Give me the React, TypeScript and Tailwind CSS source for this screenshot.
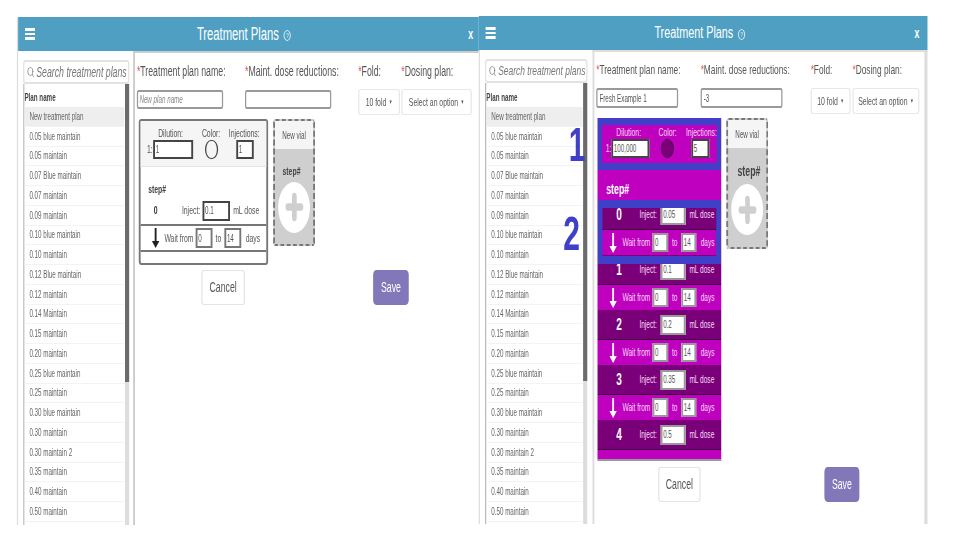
import { Plus, Search } from "lucide-react";

const PLANS = [
  "New treatment plan",
  "0.05 blue maintain",
  "0.05 maintain",
  "0.07 Blue maintain",
  "0.07 maintain",
  "0.09 maintain",
  "0.10 blue maintain",
  "0.10 maintain",
  "0.12 Blue maintain",
  "0.12 maintain",
  "0.14 Maintain",
  "0.15 maintain",
  "0.20 maintain",
  "0.25 blue maintain",
  "0.25 maintain",
  "0.30 blue maintain",
  "0.30 maintain",
  "0.30 maintain 2",
  "0.35 maintain",
  "0.40 maintain",
  "0.50 maintain",
];

// the whole page is squeezed sideways in the picture, so it is laid out 1536 wide and scaled to 960
function Header({ titleClass, closeMargin }: { titleClass: string; closeMargin: string }) {
  return (
    <div className="h-[34px] shrink-0 flex items-center bg-[#4f9fc2] text-white">
      <div className="ml-[11px] w-[16px] flex flex-col gap-[2px]">
        <span className="h-[2.5px] bg-white" />
        <span className="h-[2.5px] bg-white" />
        <span className="h-[2.5px] bg-white" />
      </div>
      <span className={`leading-none whitespace-nowrap ${titleClass}`}>Treatment Plans</span>
      <span className="ml-[8px] mt-[3px] size-[11px] rounded-full border border-white text-[8px] leading-[9px] text-center">?</span>
      <span className={`text-[14px] font-bold ${closeMargin}`}>x</span>
    </div>
  );
}

function Sidebar({ width, searchText, headHeight }: { width: string; searchText: string; headHeight: string }) {
  return (
    <div className={`${width} shrink-0 h-full pl-[8px] pt-[9px] flex flex-col`}>
      <div className="h-[24px] shrink-0 flex items-center gap-[3px] border-2 border-[#e2e2e2] rounded-[4px] pl-[4px] overflow-hidden">
        <Search className="size-[12px] text-[#888] shrink-0" />
        <span className={`italic text-[#777] whitespace-nowrap ${searchText}`}>Search treatment plans</span>
      </div>
      <div className="flex-1 min-h-0 border-l-2 border-[#bbb] relative overflow-hidden pr-[8px]">
        <div className={`${headHeight} pb-[2px] text-[10px] font-bold text-[#444] flex items-end`}>Plan name</div>
        {PLANS.map((plan, i) => (
          <div
            key={plan}
            className={`h-[19.75px] flex items-center pl-[8px] text-[10px] text-[#666] border-b border-[#f3f3f3] whitespace-nowrap ${i === 0 ? "bg-[#eeeeee]" : ""}`}
          >
            {plan}
          </div>
        ))}
        <div className="absolute right-0 top-0 bottom-0 w-[7px] bg-[#dddddd]">
          <div className="h-[298px] bg-[#6b6b6b]" />
        </div>
      </div>
    </div>
  );
}

function Field({ label, className }: { label: string; className: string }) {
  return (
    <div className={`text-[#555] whitespace-nowrap ${className}`}>
      <span className="text-[#e05050]">*</span>
      {label}
    </div>
  );
}

function Select({ label, className }: { label: string; className: string }) {
  return (
    <div className={`h-[26px] flex items-center justify-center gap-[4px] border-x-2 border-y border-[#e8e8e8] rounded-[4px] text-[11px] text-[#555] whitespace-nowrap ${className}`}>
      {label}
      <span className="text-[6px]">▼</span>
    </div>
  );
}

function Box({ value, className, dark }: { value: string; className: string; dark?: boolean }) {
  return (
    <div className={`bg-white border-x-[3px] border-y-2 flex items-center pl-[1px] text-[10px] text-[#555] whitespace-nowrap ${dark ? "border-[#444]" : "border-[#777]"} ${className}`}>
      {value}
    </div>
  );
}

function Arrow({ className }: { className: string }) {
  return (
    <svg viewBox="0 0 12 20" className={`w-[12px] h-[20px] shrink-0 ${className}`} fill="currentColor">
      <rect x="4.5" y="0" width="3" height="15" />
      <path d="M0 13 L12 13 L6 20 Z" />
    </svg>
  );
}

function NewVial({ height, stepClass }: { height: string; stepClass: string }) {
  return (
    <div className={`w-[67px] ${height} shrink-0 border-x-[3px] border-y-2 border-dashed border-[#777] rounded-[4px] flex flex-col bg-[#cfcfcf]`}>
      <div className="h-[28px] shrink-0 bg-[#f5f5f5] flex items-center justify-center text-[10px] text-[#555] whitespace-nowrap">New vial</div>
      <div className={`font-bold text-[#444] ${stepClass}`}>step#</div>
      <div className="size-[51px] rounded-full bg-white flex items-center justify-center self-center mt-[2px]">
        <Plus className="size-[36px] text-[#cfcfcf]" strokeWidth={5} />
      </div>
    </div>
  );
}

function InjectRow({ step, dose }: { step: string; dose: string }) {
  return (
    <div className="h-[30px] shrink-0 flex items-center border-b border-[#3d003d] bg-[#7a007a] text-[#f6dcf6] text-[10.5px]">
      <span className="ml-[30px] w-[37px] text-white text-[16px] font-bold leading-none">{step}</span>
      <span className="w-[34px] whitespace-nowrap">Inject:</span>
      <Box value={dose} className="w-[40px] h-[20px] border-[#999]" />
      <span className="ml-[6px] whitespace-nowrap">mL dose</span>
    </div>
  );
}

function WaitRow() {
  return (
    <div className="h-[25px] shrink-0 flex items-center bg-[#bf00bf] text-[#f6dcf6] text-[10.5px]">
      <Arrow className="ml-[19px] text-white" />
      <span className="ml-[9px] w-[48px] whitespace-nowrap">Wait from</span>
      <Box value="0" className="w-[25px] h-[19px] border-[#999]" />
      <span className="w-[21px] text-center">to</span>
      <Box value="14" className="w-[24px] h-[19px] border-[#999]" />
      <span className="ml-[7px]">days</span>
    </div>
  );
}

function LeftPanel() {
  return (
    <div className="w-[739px] h-full shrink-0 flex flex-col border-l-2 border-[#ddd]">
      <Header titleClass="ml-[259px] text-[18px]" closeMargin="ml-[284px]" />
      <div className="flex flex-1 min-h-0">
        <Sidebar width="w-[178px]" searchText="text-[14px]" headHeight="h-[23px]" />
        <div className="flex-1 ml-[6px] border-l-[3px] border-t-2 border-[#ccc] pl-[3px]">
          <div className="flex h-[36px] items-center text-[14px]">
            <Field label="Treatment plan name:" className="w-[173px]" />
            <Field label="Maint. dose reductions:" className="w-[181px]" />
            <Field label="Fold:" className="w-[69px]" />
            <Field label="Dosing plan:" className="w-[113px]" />
          </div>
          <div className="flex items-start h-[30px]">
            <div className="mt-[1px] w-[138px] h-[19px] border-2 border-[#999] rounded-[3px] pl-[2px] text-[10px] italic text-[#888] flex items-center">New plan name</div>
            <div className="mt-[1px] ml-[35px] w-[138px] h-[19px] border-2 border-[#999] rounded-[3px]" />
            <Select label="10 fold" className="ml-[43px] w-[67px]" />
            <Select label="Select an option" className="ml-[2px] w-[113px]" />
          </div>
          <div className="flex gap-[8px] ml-[3px]">
            <div className="w-[207px] h-[146px] shrink-0 border-x-[3px] border-y-2 border-[#777] rounded-[4px] flex flex-col text-[11px] text-[#555]">
              <div className="h-[46px] shrink-0 bg-[#f5f5f5] border-b border-[#e4e4e4] pt-[5px]">
                <div className="flex h-[14px] items-center">
                  <span className="ml-[28px] w-[70px] whitespace-nowrap">Dilution:</span>
                  <span className="w-[43px] whitespace-nowrap">Color:</span>
                  <span className="whitespace-nowrap">Injections:</span>
                </div>
                <div className="flex items-center">
                  <span className="ml-[10px] w-[10px]">1:</span>
                  <Box dark value="1" className="w-[64px] h-[19px]" />
                  <span className="ml-[19px] w-[21px] h-[19px] rounded-full border-x-2 border-y border-[#444]" />
                  <Box dark value="1" className="ml-[29px] w-[28px] h-[19px]" />
                </div>
              </div>
              <div className="h-[30px] shrink-0 flex items-end pl-[12px] font-bold text-[#444]">step#</div>
              <div className="h-[29px] shrink-0 flex items-center border-b-2 border-[#777]">
                <span className="ml-[21px] w-[45px] font-bold text-[#333]">0</span>
                <span className="w-[33px] whitespace-nowrap">Inject:</span>
                <Box value="0.1" className="w-[44px] h-[20px]" dark />
                <span className="ml-[5px] whitespace-nowrap">mL dose</span>
              </div>
              <div className="h-[26px] shrink-0 flex items-center border-b-2 border-[#777]">
                <Arrow className="ml-[18px] text-[#222]" />
                <span className="ml-[8px] w-[50px] whitespace-nowrap">Wait from</span>
                <Box value="0" className="w-[27px] h-[20px]" />
                <span className="w-[19px] text-center">to</span>
                <Box value="14" className="w-[27px] h-[20px]" />
                <span className="ml-[7px]">days</span>
              </div>
            </div>
            <NewVial height="h-[127px]" stepClass="text-[11px] pl-[12px] mt-[14px]" />
          </div>
          <div className="flex mt-[5px]">
            <button className="ml-[103px] w-[70px] h-[35px] border-x-2 border-y border-[#e4e4e4] rounded-[4px] text-[14px] text-[#555]">Cancel</button>
            <button className="ml-[205px] w-[57px] h-[35px] rounded-[5px] bg-[#8277b9] text-[14px] text-white">Save</button>
          </div>
        </div>
      </div>
    </div>
  );
}

function RightPanel() {
  return (
    <div className="w-[718px] h-full shrink-0 -mt-px flex flex-col relative">
      <Header titleClass="ml-[254px] text-[17.3px]" closeMargin="ml-[271px]" />
      <div className="flex flex-1 min-h-0 border-l-2 border-[#ddd]">
        <Sidebar width="w-[172px]" searchText="text-[13.5px]" headHeight="h-[24px]" />
        <div className="flex-1 ml-[8px] border-l-[3px] border-t-2 border-r-[5px] border-[#ddd] pl-[3px]">
          <div className="flex h-[36px] items-center text-[13.3px]">
            <Field label="Treatment plan name:" className="w-[167px]" />
            <Field label="Maint. dose reductions:" className="w-[176px]" />
            <Field label="Fold:" className="w-[67px]" />
            <Field label="Dosing plan:" className="w-[107px]" />
          </div>
          <div className="flex items-start h-[30px]">
            <div className="w-[131px] h-[20px] border-2 border-[#999] rounded-[3px] pl-[3px] text-[10px] text-[#555] flex items-center">Fresh Example 1</div>
            <div className="ml-[36px] w-[131px] h-[20px] border-2 border-[#999] rounded-[3px] pl-[3px] text-[10px] text-[#555] flex items-center">-3</div>
            <Select label="10 fold" className="ml-[45px] w-[64px]" />
            <Select label="Select an option" className="ml-[3px] w-[107px]" />
          </div>
          <div className="flex gap-[8px] ml-[2px]">
            <div className="w-[198px] h-[343px] shrink-0 relative flex flex-col bg-[#bf00bf] border-b-2 border-[#999] text-[11px]">
              <div className="h-[52px] shrink-0 border-x-[7px] border-y-[7px] border-[#3f3fc8] bg-[#bf00bf] text-[#f6dcf6]">
                <div className="flex h-[14px] items-center">
                  <span className="ml-[23px] w-[69px] whitespace-nowrap">Dilution:</span>
                  <span className="w-[45px] whitespace-nowrap">Color:</span>
                  <span className="whitespace-nowrap">Injections:</span>
                </div>
                <div className="flex items-center">
                  <span className="ml-[6px] w-[9px]">1:</span>
                  <Box dark value="100,000" className="w-[61px] h-[19px]" />
                  <span className="ml-[19px] w-[20px] h-[19px] rounded-full bg-[#7a007a] border border-[#3d003d]" />
                  <Box dark value="5" className="ml-[28px] w-[29px] h-[19px]" />
                </div>
              </div>
              <div className="h-[30px] shrink-0 flex items-center pl-[14px] pt-[8px] text-white text-[14px] font-bold">step#</div>
              <InjectRow step="0" dose="0.05" />
              <WaitRow />
              <InjectRow step="1" dose="0.1" />
              <WaitRow />
              <InjectRow step="2" dose="0.2" />
              <WaitRow />
              <InjectRow step="3" dose="0.35" />
              <WaitRow />
              <InjectRow step="4" dose="0.5" />
              <div className="absolute left-0 right-0 top-[82px] h-[64px] border-x-[8px] border-y-[8px] border-[#3f3fc8] pointer-events-none" />
            </div>
            <NewVial height="h-[131px]" stepClass="text-[14px] pl-[15px] mt-[13px]" />
          </div>
          <div className="flex mt-[6px]">
            <button className="ml-[99px] w-[68px] h-[35px] border-x-2 border-y border-[#e4e4e4] rounded-[4px] text-[14px] text-[#555]">Cancel</button>
            <button className="ml-[198px] w-[56px] h-[35px] rounded-[5px] bg-[#8277b9] text-[14px] text-white">Save</button>
          </div>
        </div>
      </div>
      <span className="absolute left-[144px] top-[105px] text-[48px] leading-none font-bold text-[#3f3fc8]">1</span>
      <span className="absolute left-[135px] top-[194px] text-[48px] leading-none font-bold text-[#3f3fc8]">2</span>
    </div>
  );
}

export default function App() {
  return (
    <div className="w-[960px] h-[540px] bg-white overflow-hidden">
      <div className="w-[1536px] origin-top-left scale-x-[0.625] font-['Liberation_Sans',sans-serif]">
        <div className="flex pl-[27px] pt-[17px] h-[525px]">
          <LeftPanel />
          <RightPanel />
        </div>
      </div>
    </div>
  );
}
